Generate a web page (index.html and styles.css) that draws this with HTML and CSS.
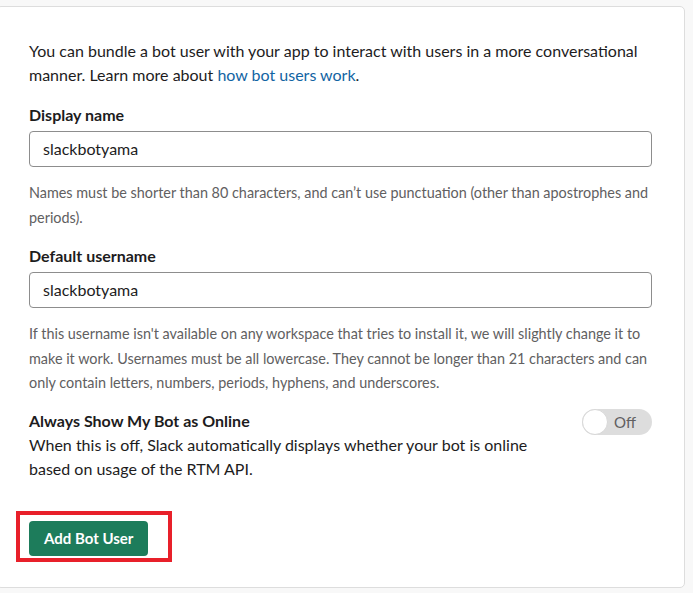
FILE: index.html
```html
<!DOCTYPE html>
<html>
<head>
<meta charset="utf-8">
<link rel="stylesheet" href="styles.css">
</head>
<body>
<div class="page">
  <div class="card">
    <p class="intro">You can bundle a bot user with your app to interact with users in a more conversational manner. Learn more about <a class="link" href="#">how bot users work</a>.</p>

    <div class="field">
      <label class="label">Display name</label>
      <div class="input">slackbotyama</div>
      <p class="help">Names must be shorter than 80 characters, and can’t use punctuation (other than apostrophes and periods).</p>
    </div>

    <div class="field field-last">
      <label class="label">Default username</label>
      <div class="input">slackbotyama</div>
      <p class="help">If this username isn't available on any workspace that tries to install it, we will slightly change it to make it work. Usernames must be all lowercase. They cannot be longer than 21 characters and can only contain letters, numbers, periods, hyphens, and underscores.</p>
    </div>

    <div class="online">
      <div class="online-text">
        <div class="label">Always Show My Bot as Online</div>
        <p class="online-desc">When this is off, Slack automatically displays whether your bot is online based on usage of the RTM API.</p>
      </div>
      <div class="toggle"><span class="knob"></span><span class="toggle-label">Off</span></div>
    </div>

    <div class="actions">
      <div class="highlight"><button class="btn">Add Bot User</button></div>
    </div>
  </div>
</div>
</body>
</html>
```

FILE: styles.css
```css
* { box-sizing: border-box; }
html, body {
  margin: 0;
  padding: 0;
  background: #f8f8f8;
  font-family: Lato, "Open Sans", sans-serif;
  color: #1d1c1d;
}
.page {
  padding-top: 6px;
  height: 593px;
  overflow: hidden;
}
.card {
  margin-left: -4px;
  width: 689px;
  background: #fff;
  border: 1px solid #dddddd;
  border-radius: 5px;
  padding: 32px 32px 25px 32px;
}
.intro {
  margin: 0 0 16px 0;
  font-size: 16px;
  line-height: 24px;
}
.link { color: #1264a3; text-decoration: none; }
.field { margin-bottom: 14px; }
.field-last { margin-bottom: 13px; }
.label {
  display: block;
  font-size: 16px;
  font-weight: 700;
  line-height: 24px;
}
.input {
  margin-top: 4px;
  height: 36px;
  border: 1px solid #8d8d8d;
  border-radius: 4px;
  padding: 0 13px;
  font-size: 16px;
  line-height: 34px;
  color: #1d1c1d;
}
.help {
  margin: 14px 0 0 0;
  font-size: 14.4px;
  line-height: 24.5px;
  color: #616061;
}
.online {
  display: flex;
  justify-content: space-between;
  align-items: flex-start;
}
.online-desc {
  margin: 0;
  font-size: 16px;
  line-height: 24px;
  width: 515px;
}
.toggle {
  width: 70px;
  height: 26px;
  border-radius: 13px;
  background: #dddddd;
  display: flex;
  align-items: center;
  flex-shrink: 0;
}
.knob {
  width: 26px;
  height: 26px;
  border-radius: 50%;
  background: #fff;
  border: 1px solid #d8d8d8;
}
.toggle-label {
  margin-left: 6px;
  font-size: 15px;
  color: #616061;
}
.actions {
  margin-top: 30px;
  margin-left: -13px;
}
.highlight {
  display: inline-block;
  border: 4px solid #e8202a;
  padding: 6px 20px 2px 9px;
}
.btn {
  display: block;
  height: 35px;
  padding: 0 15px;
  background: #1d7c5b;
  color: #fff;
  border: none;
  border-radius: 4px;
  font-family: Lato, sans-serif;
  font-size: 15px;
  font-weight: 700;
}
```
